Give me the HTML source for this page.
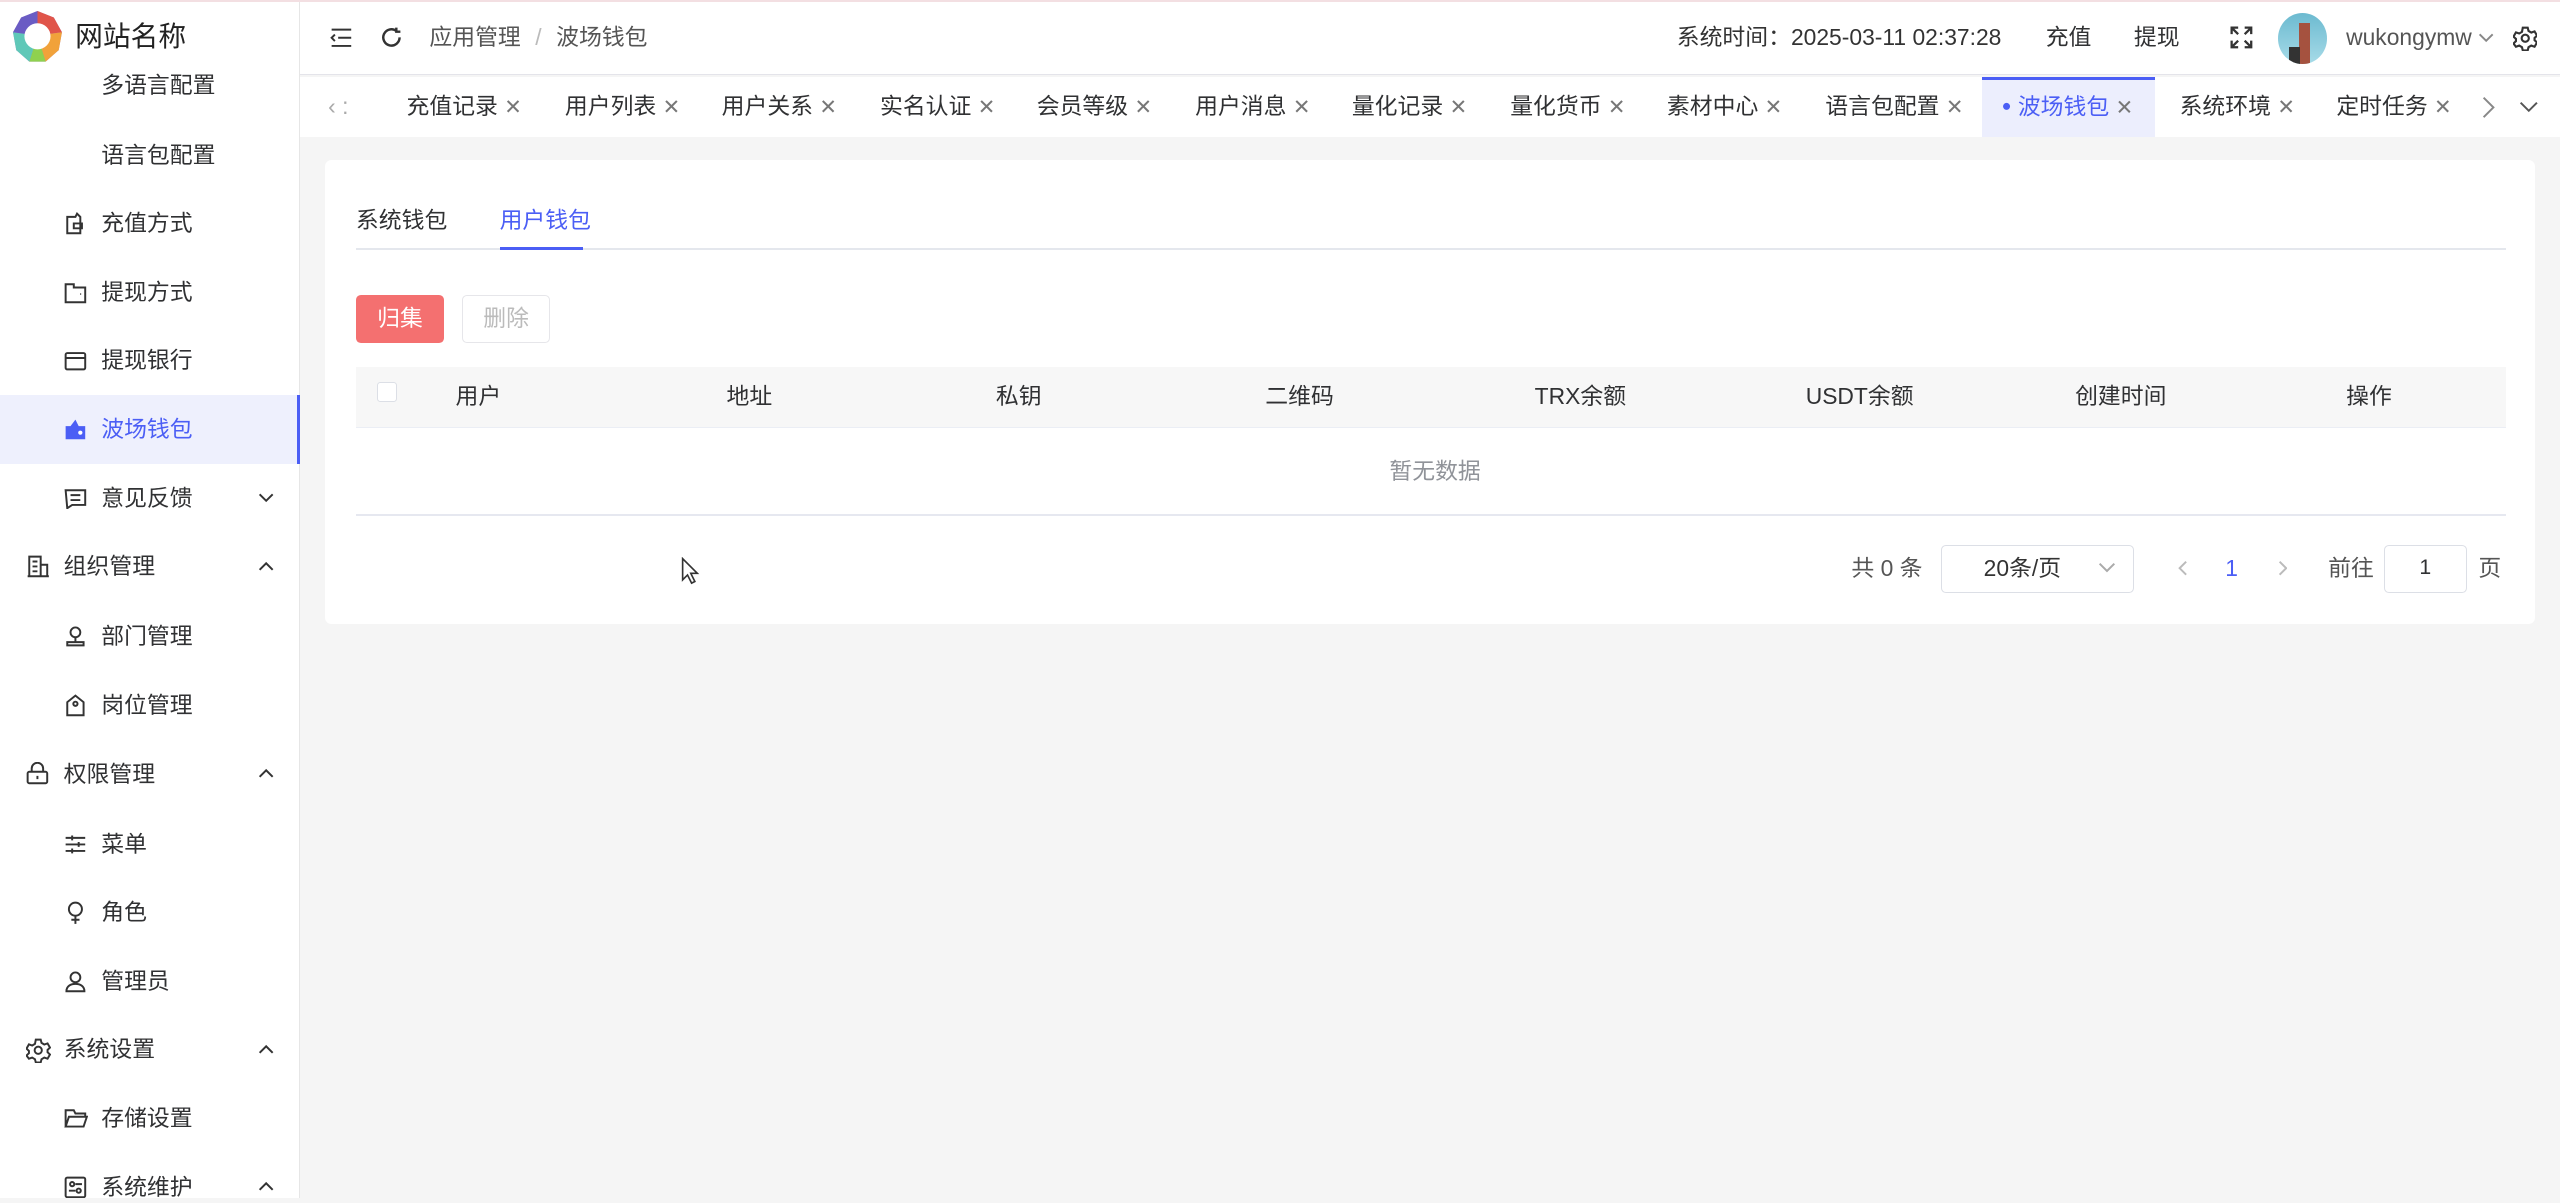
<!DOCTYPE html>
<html><head><meta charset="utf-8"><style>
html{zoom:1.63265}
*{margin:0;padding:0;box-sizing:border-box}
body{width:1568px;height:734px;overflow:hidden;background:#f5f5f5;font-family:"Liberation Sans","Noto Sans CJK SC",sans-serif;font-size:14px;color:#303133;position:relative}
.a{position:absolute;white-space:nowrap;line-height:20px}
.sb{position:absolute;left:0;top:0;width:184px;height:734px;background:#fff;border-right:1px solid #e6e6e6}
.hd{position:absolute;left:184px;top:0;right:0;height:46px;background:#fff;border-bottom:1px solid #e4e4ea}
.tb{position:absolute;left:184px;top:47px;right:0;height:37px;background:#fff}
svg.i{position:absolute;fill:none;stroke:#333;stroke-width:1.2}
.x{color:#777;font-size:13px}
.card{position:absolute;left:199px;top:98px;width:1354px;height:284px;background:#fff;border-radius:4px}
</style></head><body>
<div style="position:absolute;left:0;top:0;width:1568px;height:1px;background:#f3dfe2;z-index:5"></div>
<div class="sb">
<svg style="position:absolute;left:8px;top:7px" width="30" height="31" viewBox="0 0 30 31">
<polygon points="15,0 25,4 30,13 28,24 20,31 10,31 2,24 0,13 5,4" fill="#a87fd0"/>
<polygon points="15,0 25,4 30,13 15,15" fill="#e0554a"/>
<polygon points="30,13 28,24 20,31 15,15" fill="#f1a23a"/>
<polygon points="20,31 10,31 15,15" fill="#8fd14f"/>
<polygon points="10,31 2,24 0,13 15,15" fill="#5fc8b8"/>
<polygon points="0,13 5,4 15,0 15,15" fill="#6a5cc4"/>
<circle cx="15" cy="15.5" r="8" fill="#fff"/>
</svg>
<div class="a" style="left:46px;top:13px;font-size:17px;color:#222">网站名称</div>
<div class="a" style="left:62px;top:42px">多语言配置</div>
<div class="a" style="left:62px;top:85px">语言包配置</div>
<svg class="i" style="left:39px;top:130px" width="14" height="14" viewBox="0 0 14 14"><path d="M2 3h5l1-2 2 2v10H2z M6 7h5v3H6z"/></svg>
<div class="a" style="left:62px;top:127px">充值方式</div>
<svg class="i" style="left:39px;top:172px" width="14" height="14" viewBox="0 0 14 14"><path d="M1 2h5v2h7v9H1z M10 8h.5"/></svg>
<div class="a" style="left:62px;top:169px">提现方式</div>
<svg class="i" style="left:39px;top:214px" width="14" height="14" viewBox="0 0 14 14"><rect x="1" y="2.5" width="12" height="10" rx="1"/><path d="M1 5.5h12"/></svg>
<div class="a" style="left:62px;top:211px">提现银行</div>
<div style="position:absolute;left:0;top:242px;width:184px;height:42px;background:#eef0fd;border-right:2px solid #4b5ef5"></div>
<svg style="position:absolute;left:39px;top:256px" width="14" height="14" viewBox="0 0 14 14"><path d="M1 5h12v8H1z M4 5l3-4 2 4" fill="#4b5ef5"/><circle cx="10" cy="9" r="1.3" fill="#fff"/></svg>
<div class="a" style="left:62px;top:253px;color:#4b5ef5">波场钱包</div>
<svg class="i" style="left:39px;top:298px" width="14" height="14" viewBox="0 0 14 14"><path d="M1 2h12v9H5l-3 2z M4 5h6 M4 8h6"/></svg>
<div class="a" style="left:62px;top:295px">意见反馈</div>
<svg class="i" style="left:158px;top:301px" width="10" height="8" viewBox="0 0 10 8"><path d="M1 2l4 4 4-4"/></svg>
<svg class="i" style="left:16px;top:340px" width="15" height="14" viewBox="0 0 15 14"><path d="M1 13h13 M2 13V1h7v12 M9 6h4v7 M4 4h3 M4 7h3 M4 10h3"/></svg>
<div class="a" style="left:39px;top:337px">组织管理</div>
<svg class="i" style="left:158px;top:343px" width="10" height="8" viewBox="0 0 10 8"><path d="M1 6l4-4 4 4"/></svg>
<svg class="i" style="left:39px;top:383px" width="14" height="14" viewBox="0 0 14 14"><circle cx="7" cy="4.5" r="3"/><path d="M7 7.5v3 M2 10.5h10v2H2z"/></svg>
<div class="a" style="left:62px;top:380px">部门管理</div>
<svg class="i" style="left:39px;top:425px" width="14" height="14" viewBox="0 0 14 14"><path d="M2 13V5l5-4 5 4v8z"/><circle cx="7" cy="6" r="1.3"/></svg>
<div class="a" style="left:62px;top:422px">岗位管理</div>
<svg class="i" style="left:16px;top:467px" width="14" height="14" viewBox="0 0 14 14"><rect x="1" y="6" width="12" height="7" rx="1"/><path d="M3.5 6V4a3.5 3.5 0 0 1 7 0v2 M7 8.5v2"/></svg>
<div class="a" style="left:39px;top:464px">权限管理</div>
<svg class="i" style="left:158px;top:470px" width="10" height="8" viewBox="0 0 10 8"><path d="M1 6l4-4 4 4"/></svg>
<svg class="i" style="left:39px;top:510px" width="14" height="14" viewBox="0 0 14 14"><path d="M1 3h12 M1 7h12 M1 11h12 M5 1.5v3 M9 5.5v3 M5 9.5v3"/></svg>
<div class="a" style="left:62px;top:507px">菜单</div>
<svg class="i" style="left:39px;top:552px" width="14" height="14" viewBox="0 0 14 14"><circle cx="7" cy="5" r="4"/><path d="M7 9v5 M4.5 11.5h5"/></svg>
<div class="a" style="left:62px;top:549px">角色</div>
<svg class="i" style="left:39px;top:594px" width="14" height="14" viewBox="0 0 14 14"><circle cx="7" cy="4.5" r="3"/><path d="M1.5 13c0-3 2.5-4.5 5.5-4.5s5.5 1.5 5.5 4.5z"/></svg>
<div class="a" style="left:62px;top:591px">管理员</div>
<svg class="i" style="left:16px;top:636px" width="15" height="15" viewBox="0 0 15 15"><circle cx="7.5" cy="7.5" r="2.2"/><path d="M6 1h3l.5 2 1.7 1 2-.7 1.5 2.6-1.5 1.4v1.4l1.5 1.4-1.5 2.6-2-.7-1.7 1-.5 2H6l-.5-2-1.7-1-2 .7L.3 10.7l1.5-1.4V7.9L.3 6.5l1.5-2.6 2 .7 1.7-1z"/></svg>
<div class="a" style="left:39px;top:633px">系统设置</div>
<svg class="i" style="left:158px;top:639px" width="10" height="8" viewBox="0 0 10 8"><path d="M1 6l4-4 4 4"/></svg>
<svg class="i" style="left:39px;top:678px" width="15" height="14" viewBox="0 0 15 14"><path d="M1 12V2h5l1 2h6v2 M1 12l2-6h11l-2 6z"/></svg>
<div class="a" style="left:62px;top:675px">存储设置</div>
<svg class="i" style="left:39px;top:720px" width="14" height="14" viewBox="0 0 14 14"><rect x="1" y="1" width="12" height="12" rx="1"/><circle cx="5" cy="5" r="1.3"/><circle cx="9" cy="9" r="1.3"/><path d="M7 5h4 M3 9h4"/></svg>
<div class="a" style="left:62px;top:717px">系统维护</div>
<svg class="i" style="left:158px;top:723px" width="10" height="8" viewBox="0 0 10 8"><path d="M1 6l4-4 4 4"/></svg>
</div>

<div class="hd">
<svg class="i" style="left:18px;top:17px" width="14" height="12" viewBox="0 0 14 12"><path d="M1 1h12 M5 6h8 M1 11h12 M3 4L1 6l2 2"/></svg>
<svg class="i" style="left:49px;top:16px;stroke-width:1.5" width="14" height="14" viewBox="0 0 14 14"><path d="M12 7a5 5 0 1 1-2-4 M10 1v2.5h2.5"/></svg>
<div class="a" style="left:79px;top:13px;color:#555">应用管理 <span style="color:#bbb;margin:0 5px">/</span> 波场钱包</div>
<div class="a" style="left:843px;top:13px;color:#333">系统时间：2025-03-11 02:37:28</div>
<div class="a" style="left:1069px;top:13px">充值</div>
<div class="a" style="left:1123px;top:13px">提现</div>
<svg class="i" style="left:1182px;top:16px;stroke-width:1.4" width="14" height="14" viewBox="0 0 14 14"><path d="M1 5V1h4 M9 1h4v4 M13 9v4H9 M5 13H1V9 M1 1l4 4 M13 1L9 5 M13 13L9 9 M1 13l4-4"/></svg>
<div style="position:absolute;left:1211px;top:8px;width:30px;height:31px;border-radius:50%;background:linear-gradient(#6cbad0,#a7dbe8);overflow:hidden"><div style="position:absolute;left:13px;top:6px;width:7px;height:25px;background:#a5523f"></div><div style="position:absolute;left:7px;top:21px;width:7px;height:10px;background:#333"></div></div>
<div class="a" style="left:1253px;top:13px;color:#555">wukongymw</div>
<svg class="i" style="left:1334px;top:19px;stroke:#888" width="10" height="8" viewBox="0 0 10 8"><path d="M1 2l4 4 4-4"/></svg>
<svg class="i" style="left:1355px;top:16px;stroke-width:1.3" width="15" height="15" viewBox="0 0 15 15"><circle cx="7.5" cy="7.5" r="2.2"/><path d="M6 1h3l.5 2 1.7 1 2-.7 1.5 2.6-1.5 1.4v1.4l1.5 1.4-1.5 2.6-2-.7-1.7 1-.5 2H6l-.5-2-1.7-1-2 .7L.3 10.7l1.5-1.4V7.9L.3 6.5l1.5-2.6 2 .7 1.7-1z"/></svg>
</div>

<div class="tb">
<div class="a" style="left:17px;top:8px;color:#aaa">‹ :</div>
<div class="a" style="left:65px;top:8px">充值记录 <span class="x">✕</span></div>
<div class="a" style="left:162px;top:8px">用户列表 <span class="x">✕</span></div>
<div class="a" style="left:258px;top:8px">用户关系 <span class="x">✕</span></div>
<div class="a" style="left:355px;top:8px">实名认证 <span class="x">✕</span></div>
<div class="a" style="left:451px;top:8px">会员等级 <span class="x">✕</span></div>
<div class="a" style="left:548px;top:8px">用户消息 <span class="x">✕</span></div>
<div class="a" style="left:644px;top:8px">量化记录 <span class="x">✕</span></div>
<div class="a" style="left:741px;top:8px">量化货币 <span class="x">✕</span></div>
<div class="a" style="left:837px;top:8px">素材中心 <span class="x">✕</span></div>
<div class="a" style="left:934px;top:8px">语言包配置 <span class="x">✕</span></div>
<div style="position:absolute;left:1030px;top:0;width:106px;height:37px;background:#eceefd;border-top:2px solid #4b5ef5"></div>
<div class="a" style="left:1042px;top:8px;color:#4b5ef5"><span style="font-size:10px;vertical-align:2px">●</span> 波场钱包 <span class="x">✕</span></div>
<div class="a" style="left:1151px;top:8px">系统环境 <span class="x">✕</span></div>
<div class="a" style="left:1247px;top:8px">定时任务 <span class="x">✕</span></div>
<svg class="i" style="left:1336px;top:12px;stroke:#888" width="8" height="14" viewBox="0 0 8 14"><path d="M1 1l6 6-6 6"/></svg>
<svg class="i" style="left:1359px;top:15px;stroke:#555" width="12" height="8" viewBox="0 0 12 8"><path d="M1 1l5 5 5-5"/></svg>
</div>

<div class="card">
<div class="a" style="left:19px;top:27px">系统钱包</div>
<div class="a" style="left:107px;top:27px;color:#4b5ef5">用户钱包</div>
<div style="position:absolute;left:19px;top:54px;width:1317px;height:1px;background:#e4e7ed"></div>
<div style="position:absolute;left:107px;top:53px;width:51px;height:2px;background:#4b5ef5"></div>
<div style="position:absolute;left:19px;top:83px;width:54px;height:29px;background:#f47070;border-radius:3px;color:#fff;text-align:center;line-height:29px">归集</div>
<div style="position:absolute;left:84px;top:83px;width:54px;height:29px;border:1px solid #e6e6ea;border-radius:3px;color:#bbb;text-align:center;line-height:27px">删除</div>
<div style="position:absolute;left:19px;top:127px;width:1317px;height:37px;background:#f7f7f7;border-bottom:1px solid #ebeef5"></div>
<div style="position:absolute;left:32px;top:136px;width:12px;height:12px;border:1px solid #dcdfe6;border-radius:2px;background:#fff"></div>
<div class="a" style="left:80px;top:135px">用户</div>
<div class="a" style="left:246px;top:135px">地址</div>
<div class="a" style="left:411px;top:135px">私钥</div>
<div class="a" style="left:576px;top:135px">二维码</div>
<div class="a" style="left:741px;top:135px">TRX余额</div>
<div class="a" style="left:907px;top:135px">USDT余额</div>
<div class="a" style="left:1072px;top:135px">创建时间</div>
<div class="a" style="left:1238px;top:135px">操作</div>
<div class="a" style="left:652px;top:181px;color:#909399">暂无数据</div>
<div style="position:absolute;left:19px;top:217px;width:1317px;height:1px;background:#e6e8f0"></div>
<div class="a" style="left:935px;top:240px;color:#555">共 0 条</div>
<div style="position:absolute;left:990px;top:236px;width:118px;height:29px;border:1px solid #dcdfe6;border-radius:3px"></div>
<div class="a" style="left:1016px;top:240px;color:#333">20条/页</div>
<svg class="i" style="left:1086px;top:246px;stroke:#aaa" width="11" height="7" viewBox="0 0 11 7"><path d="M1 1l4.5 4.5L10 1"/></svg>
<svg class="i" style="left:1135px;top:245px;stroke:#bbb" width="6" height="10" viewBox="0 0 6 10"><path d="M5 1L1 5l4 4"/></svg>
<div class="a" style="left:1164px;top:240px;color:#4b5ef5">1</div>
<svg class="i" style="left:1196px;top:245px;stroke:#bbb" width="6" height="10" viewBox="0 0 6 10"><path d="M1 1l4 4-4 4"/></svg>
<div class="a" style="left:1227px;top:240px;color:#555">前往</div>
<div style="position:absolute;left:1261px;top:236px;width:51px;height:29px;border:1px solid #dcdfe6;border-radius:3px;text-align:center;line-height:27px;font-size:13px">1</div>
<div class="a" style="left:1319px;top:240px;color:#555">页</div>
<svg style="position:absolute;left:218px;top:243px" width="12" height="18" viewBox="0 0 12 18"><path d="M1 1v13l3-3 2.5 5 2-1-2.5-5h4z" fill="#fff" stroke="#333" stroke-width="1"/></svg>
</div>
</body></html>
